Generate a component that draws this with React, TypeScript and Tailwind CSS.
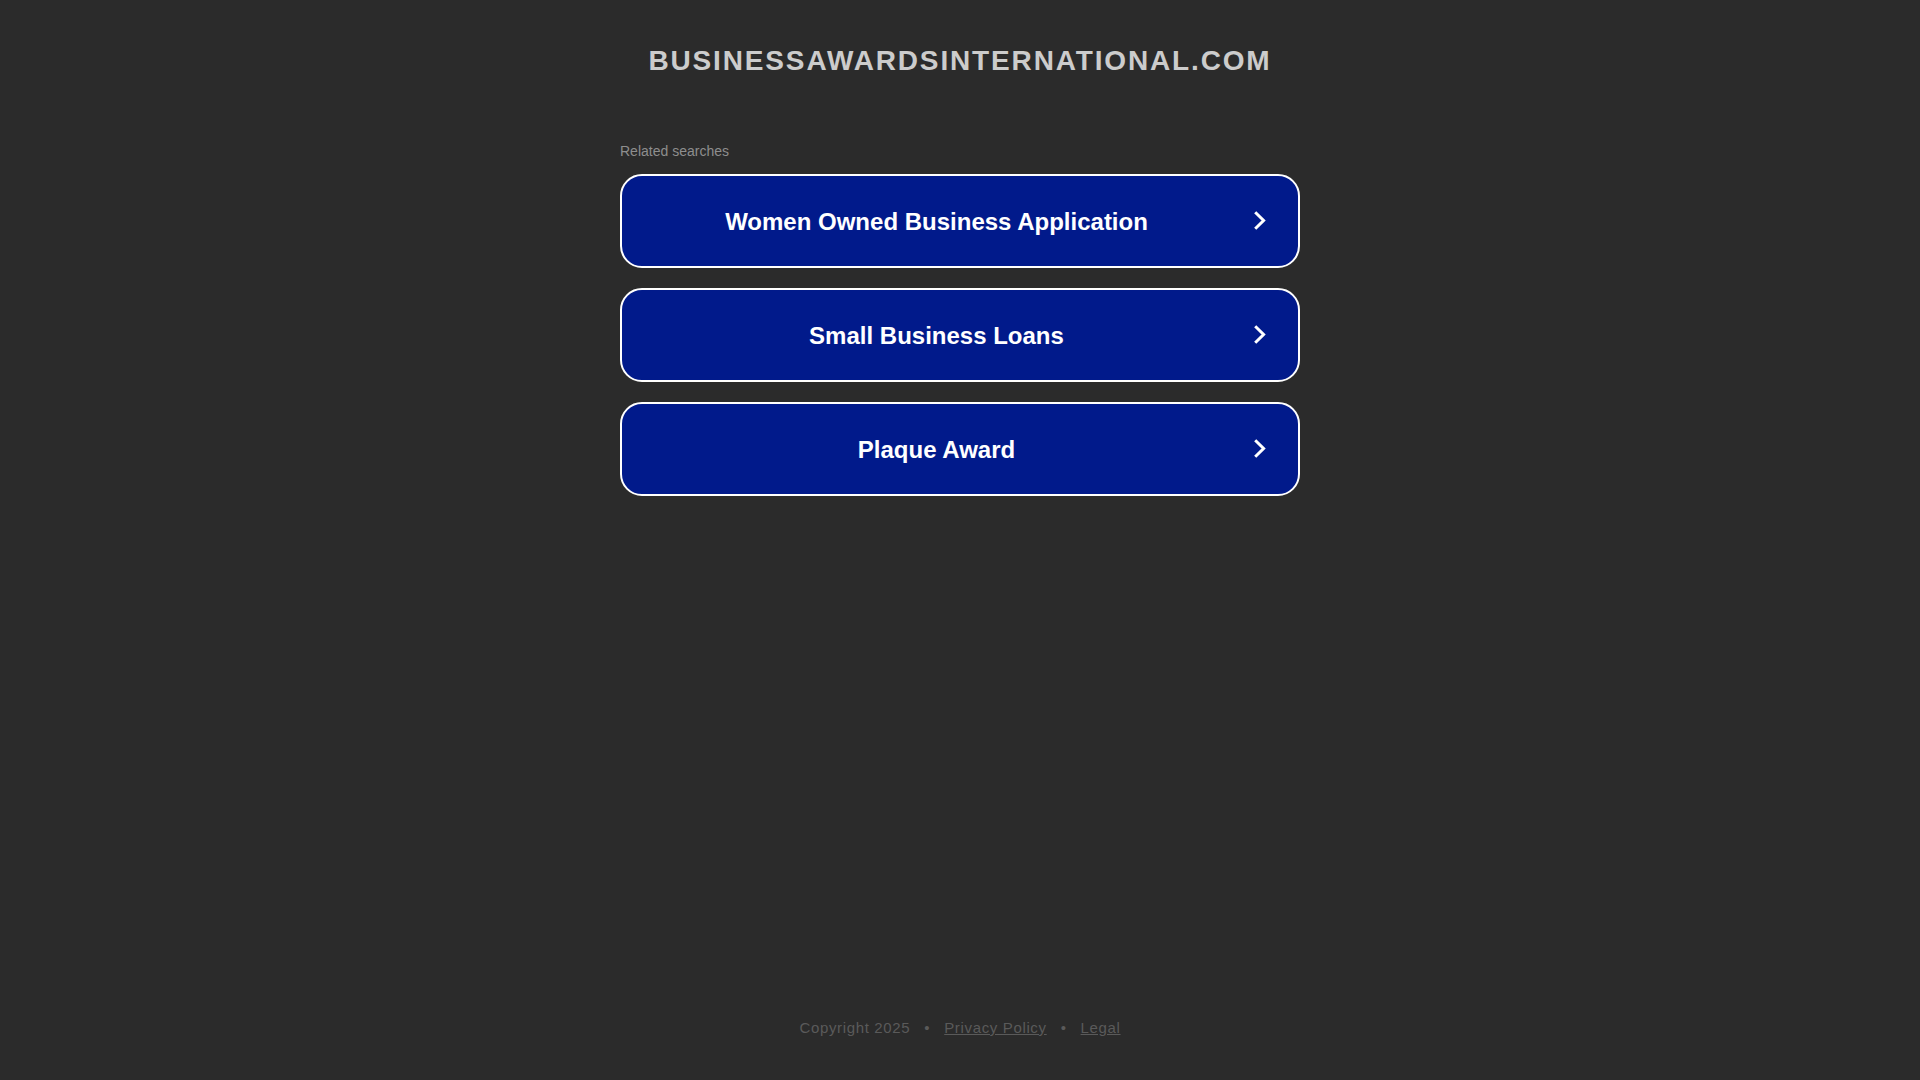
import React from "react";

const items = ["Women Owned Business Application", "Small Business Loans", "Plaque Award"];

function Chevron() {
  return (
    <svg width="14" height="22" viewBox="0 0 14 22" className="ml-[2px] mr-[31px] shrink-0" aria-hidden="true">
      <polyline points="2.2,2.2 10.6,10.5 2.2,18.8" fill="none" stroke="#ffffff" strokeWidth="3" strokeLinecap="butt" strokeLinejoin="miter" />
    </svg>
  );
}

export default function App() {
  return (
    <div className="min-h-screen w-full bg-[#2b2b2b] flex flex-col items-center" style={{ fontFamily: '"Liberation Sans", Arial, sans-serif' }}>
      <h1 className="mt-[45px] text-[28px] leading-[32px] font-bold tracking-[1.85px] text-[#cccccc] text-center">
        BUSINESSAWARDSINTERNATIONAL.COM
      </h1>
      <div className="w-[680px] mt-[66px] flex flex-col">
        <div className="text-[14px] leading-[16px] text-[#8e8e8e]">Related searches</div>
        <div className="mt-[15px] flex flex-col gap-[20px]">
          {items.map((t) => (
            <a
              key={t}
              href="#"
              className="h-[94px] w-full rounded-[22px] border-2 border-white bg-[#011a8b] flex items-center no-underline"
            >
              <span className="flex-1 pt-[2px] text-center text-white font-bold text-[24px] leading-[28px]">{t}</span>
              <Chevron />
            </a>
          ))}
        </div>
      </div>
      <footer className="mt-auto pb-[42px] flex items-center text-[15px] leading-[20px] tracking-[0.65px] text-[#5a5a5a]">
        <span>Copyright 2025</span>
        <span className="mx-[14px]">•</span>
        <a href="#" className="underline">Privacy Policy</a>
        <span className="mx-[14px]">•</span>
        <a href="#" className="underline">Legal</a>
      </footer>
    </div>
  );
}
